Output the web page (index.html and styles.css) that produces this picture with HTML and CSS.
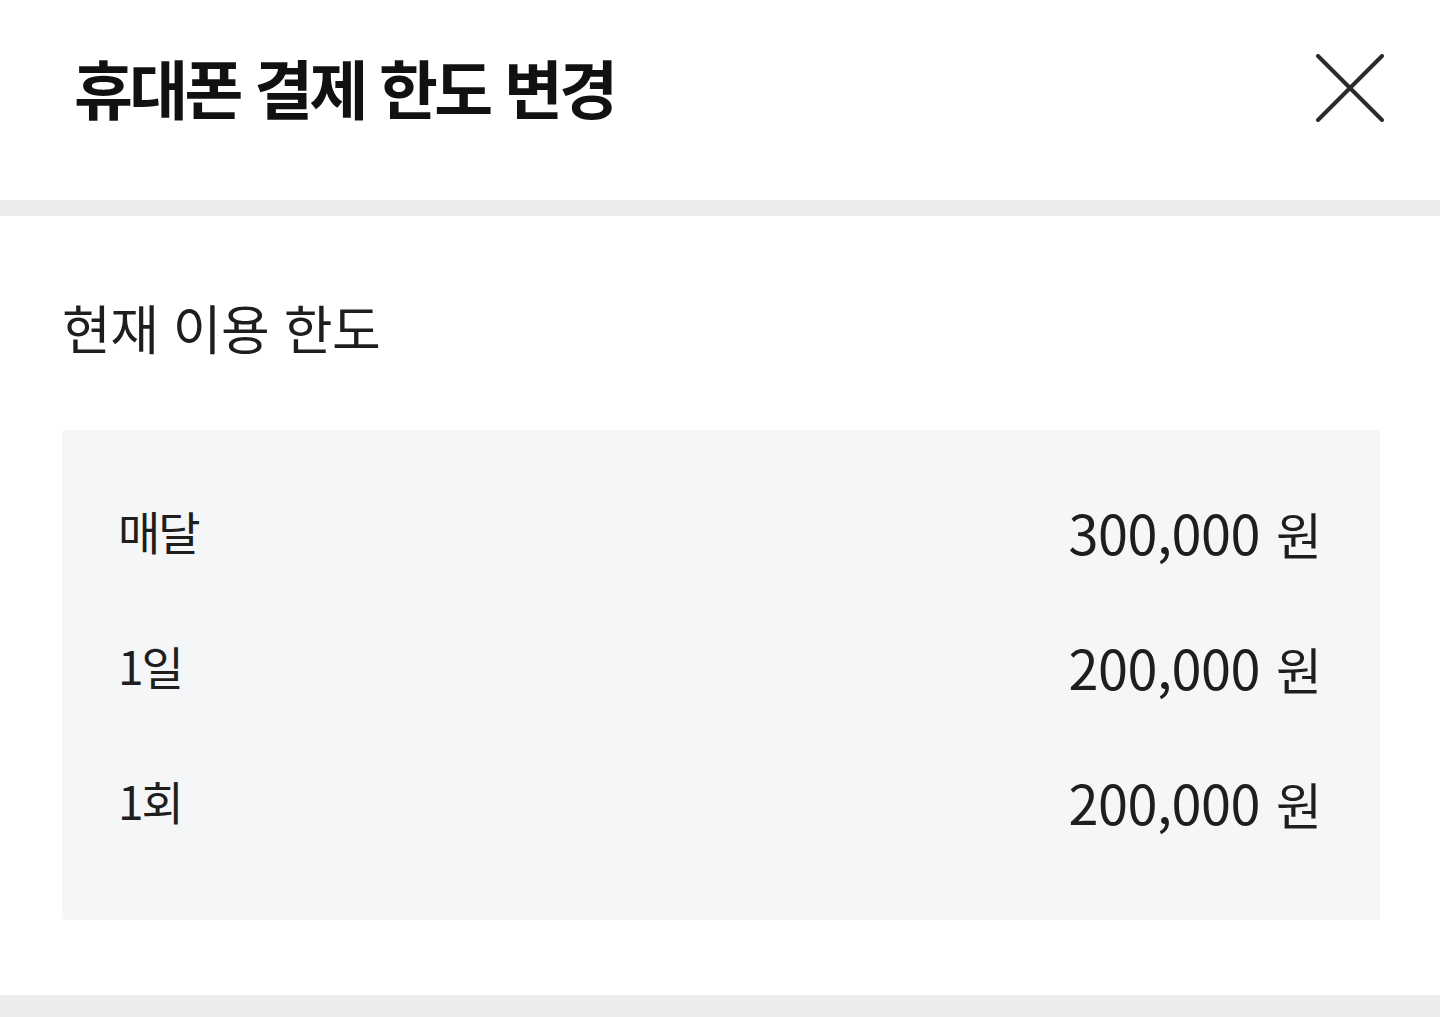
FILE: index.html
```html
<!DOCTYPE html>
<html lang="ko">
<head>
<meta charset="utf-8">
<title>휴대폰 결제 한도 변경</title>
<link rel="stylesheet" href="styles.css">
</head>
<body>
<div class="page">
  <header class="header">
    <h1 class="title">휴대폰 결제 한도 변경</h1>
    <button class="close" aria-label="닫기">
      <svg width="68" height="68" viewBox="0 0 68 68" fill="none">
        <path d="M2 2L66 66M66 2L2 66" stroke="#2b2b2b" stroke-width="4" stroke-linecap="round"/>
      </svg>
    </button>
  </header>
  <div class="divider"></div>
  <section class="section">
    <h2 class="subtitle">현재 이용 한도</h2>
    <div class="box">
      <div class="row"><span class="label">매달</span><span class="value"><span class="num">300,000</span><span class="unit">원</span></span></div>
      <div class="row"><span class="label">1일</span><span class="value"><span class="num">200,000</span><span class="unit">원</span></span></div>
      <div class="row"><span class="label">1회</span><span class="value"><span class="num">200,000</span><span class="unit">원</span></span></div>
    </div>
  </section>
  <div class="bottom"></div>
</div>
</body>
</html>
```
FILE: styles.css
```css
html, body {
  margin: 0;
  padding: 0;
  background: #ffffff;
}
body {
  font-family: "Noto Sans CJK KR", "Noto Sans", sans-serif;
  color: #1e1e1e;
}
.page {
  width: 1440px;
  height: 1017px;
  overflow: hidden;
  display: flex;
  flex-direction: column;
}
.header {
  height: 200px;
  display: flex;
  align-items: center;
  justify-content: space-between;
  padding: 0 56px 0 74px;
  box-sizing: border-box;
}
.title {
  margin: -28px 0 0;
  font-size: 64px;
  font-weight: 700;
  color: #111;
  letter-spacing: -3.6px;
  line-height: 1;
}
.close {
  background: none;
  border: 0;
  padding: 0;
  width: 68px;
  height: 68px;
  margin-top: -24px;
  display: flex;
}
.divider {
  height: 16px;
  background: #ececed;
}
.section {
  padding: 0 60px 0 62px;
  flex: 1;
}
.subtitle {
  margin: 81px 0 0;
  font-size: 53px;
  font-weight: 400;
  line-height: 60px;
  color: #1e1e1e;
  letter-spacing: -0.5px;
}
.box {
  margin-top: 73px;
  height: 490px;
  background: #f5f6f8;
  border-radius: 4px;
  padding: 34px 58px 0 56px;
  box-sizing: border-box;
}
.row {
  height: 135px;
  display: flex;
  align-items: center;
  justify-content: space-between;
  font-size: 46px;
  color: #1e1e1e;
}
.label {
  margin-top: -4px;
  letter-spacing: -2px;
}
.value {
  display: flex;
  align-items: baseline;
  gap: 16px;
}
.num {
  font-size: 54px;
  letter-spacing: -0.5px;
}
.unit {
  font-size: 50px;
}
.bottom {
  height: 22px;
  background: #ececed;
}
```
